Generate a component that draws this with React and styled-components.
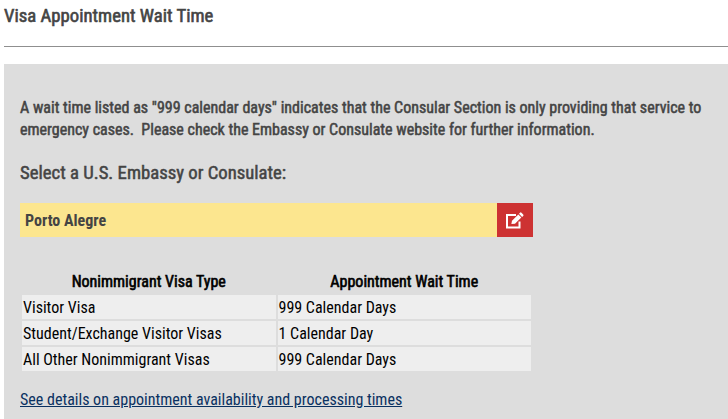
import React from "react";
import styled, { createGlobalStyle } from "styled-components";

const waitTimes = [
  { type: "Visitor Visa", wait: "999 Calendar Days" },
  { type: "Student/Exchange Visitor Visas", wait: "1 Calendar Day" },
  { type: "All Other Nonimmigrant Visas", wait: "999 Calendar Days" },
];

const EditIcon = () => (
  <svg width="18" height="17" viewBox="0 0 18 17" fill="none" aria-hidden="true">
    <path d="M10 3H1V15.5H13.5V9.5" stroke="#fff" strokeWidth="2" />
    <path d="M5.4 12L6 8.8L12.3 2.5L15.3 5.5L9 11.8Z" fill="#fff" />
    <path d="M13 1.7L14 0.7Q14.7 0 15.5 0.7L17.2 2.4Q17.9 3.2 17.2 3.9L16.1 4.9Z" fill="#fff" />
  </svg>
);

const App = () => {
  return (
    <Page>
      <GlobalStyle />
      <Title>Visa Appointment Wait Time</Title>
      <Divider />
      <Panel>
        <Notice>
          A wait time listed as "999 calendar days" indicates that the Consular Section is only providing that service to
          <br />
          emergency cases.&nbsp; Please check the Embassy or Consulate website for further information.
        </Notice>
        <Label>Select a U.S. Embassy or Consulate:</Label>
        <Picker>
          <City>Porto Alegre</City>
          <EditButton aria-label="Edit">
            <EditIcon />
          </EditButton>
        </Picker>
        <Table>
          <thead>
            <tr>
              <Th>Nonimmigrant Visa Type</Th>
              <Th>Appointment Wait Time</Th>
            </tr>
          </thead>
          <tbody>
            {waitTimes.map(({ type, wait }) => (
              <tr key={type}>
                <Td>{type}</Td>
                <Td>{wait}</Td>
              </tr>
            ))}
          </tbody>
        </Table>
        <DetailsLink href="#">See details on appointment availability and processing times</DetailsLink>
      </Panel>
    </Page>
  );
};

export default App;

const GlobalStyle = createGlobalStyle`
  body {
    margin: 0;
    background-color: #fff;
    font-family: "Roboto Condensed", Roboto, sans-serif;
    font-stretch: 75%;
    overflow: hidden;
  }
`;

const Page = styled.div`
  box-sizing: border-box;
  height: 419px;
  padding-left: 4px;
  display: flex;
  flex-direction: column;
`;

const Title = styled.h3`
  margin: 0;
  padding-top: 5px;
  height: 46px;
  box-sizing: border-box;
  font-size: 18.72px;
  line-height: 22px;
  font-weight: 400;
  -webkit-text-stroke: 0.6px;
  color: #444;
  white-space: nowrap;
`;

const Divider = styled.hr`
  width: 100%;
  height: 1px;
  margin: 0 0 17px;
  border: 0;
  background-color: #8f8f8f;
`;

const Panel = styled.div`
  flex: 1;
  padding: 33px 0 0 16px;
  background-color: #ddd;
`;

const Notice = styled.p`
  margin: 0 0 20px;
  font-size: 16px;
  line-height: 22px;
  font-weight: 400;
  -webkit-text-stroke: 0.5px;
  color: #444;
  white-space: nowrap;
`;

const Label = styled.div`
  margin-bottom: 18px;
  font-size: 18.72px;
  line-height: 24px;
  font-weight: 400;
  -webkit-text-stroke: 0.5px;
  color: #444;
`;

const Picker = styled.div`
  display: flex;
  width: 513px;
  height: 34px;
  margin-bottom: 30px;
`;

const City = styled.div`
  flex: 1;
  padding-left: 5px;
  background-color: #fce68f;
  font-size: 16px;
  line-height: 36px;
  height: 34px;
  font-weight: 700;
  color: #444;
`;

const EditButton = styled.button`
  display: flex;
  align-items: center;
  justify-content: center;
  width: 36px;
  padding: 0;
  border: 0;
  background-color: #cd3232;
  color: #fff;
  cursor: pointer;
`;

const Table = styled.table`
  width: 513px;
  table-layout: fixed;
  border-spacing: 2px;
  margin-bottom: 16px;
  font-size: 16px;
  line-height: 22px;
  color: #000;
`;

const Th = styled.th`
  padding: 2px 1px 0;
  font-weight: 400;
  -webkit-text-stroke: 0.6px;
  text-align: center;
`;

const Td = styled.td`
  padding: 2px 1px 0;
  background-color: #eee;
`;

const DetailsLink = styled.a`
  font-size: 16px;
  line-height: 22px;
  color: #0a3161;
  text-decoration: underline;
  white-space: nowrap;
`;
